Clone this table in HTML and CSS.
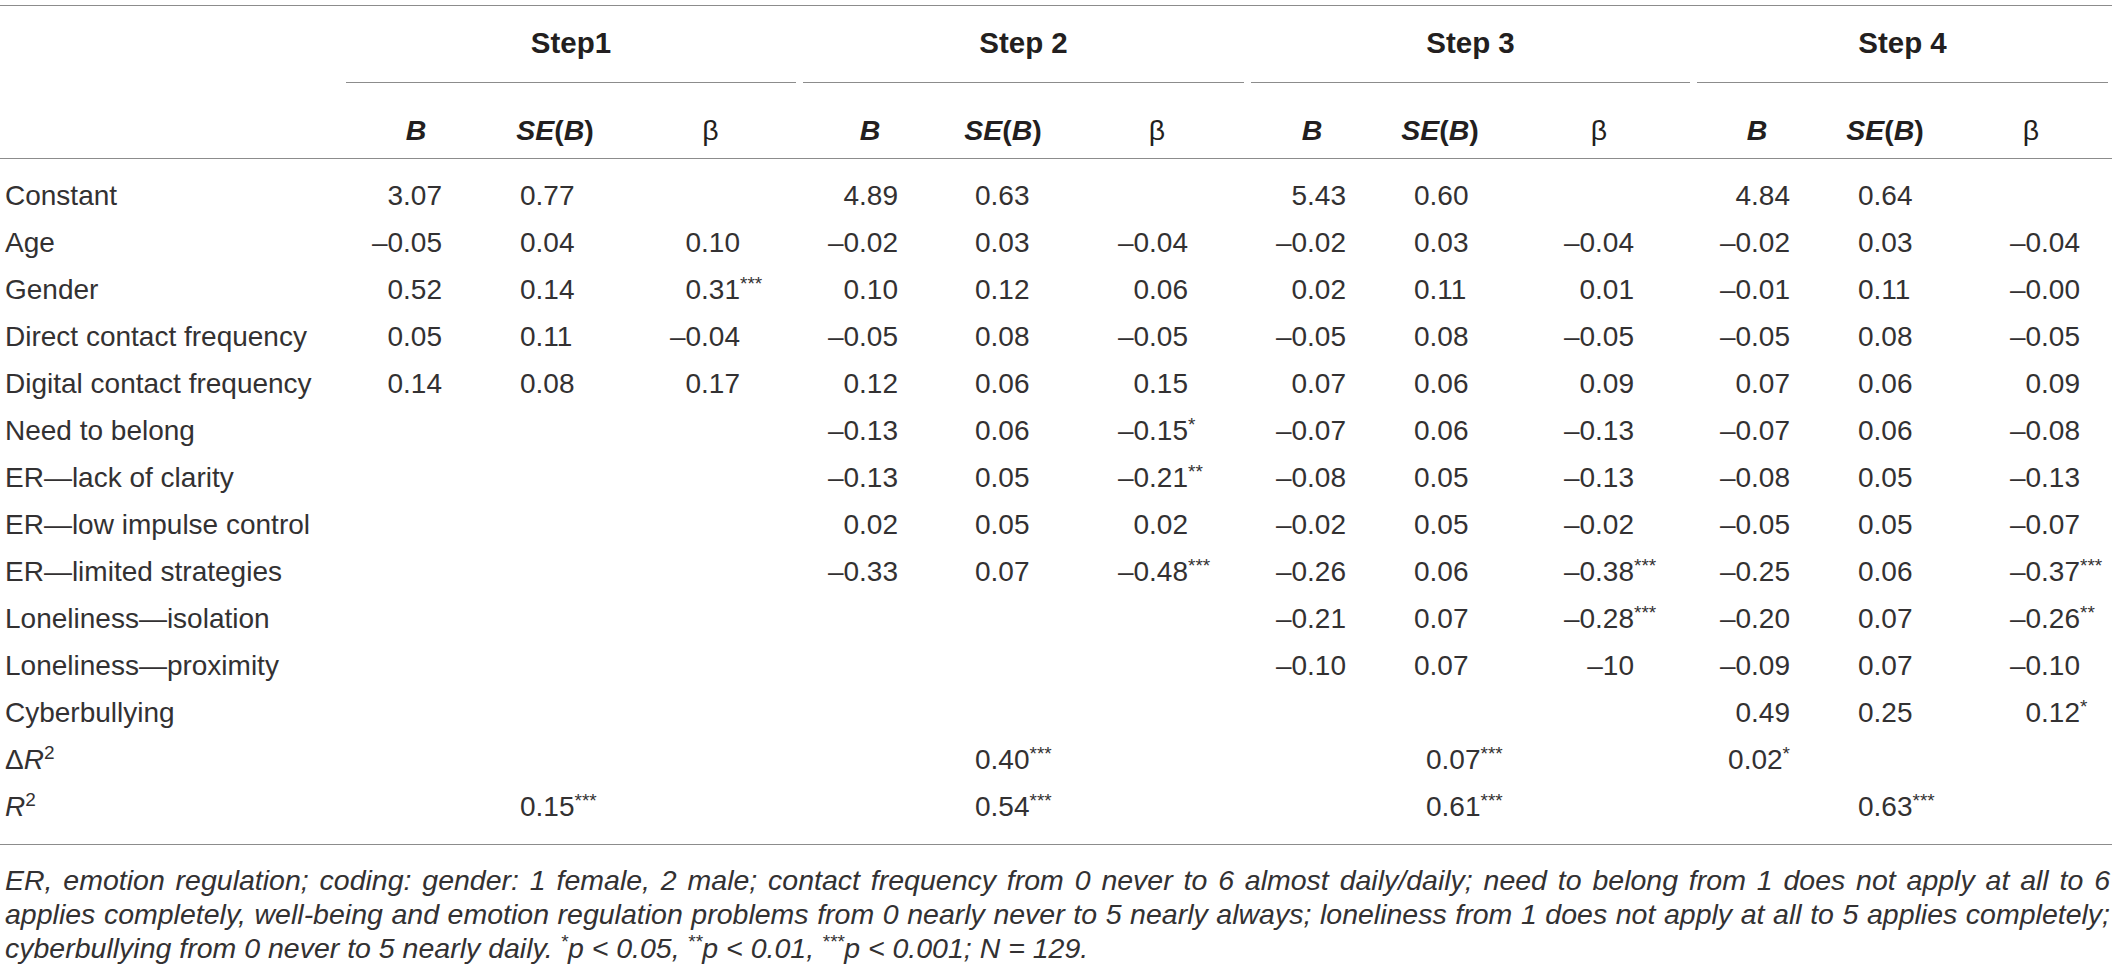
FILE: index.html
```html
<!DOCTYPE html>
<html lang="en">
<head>
<meta charset="utf-8">
<title>Hierarchical regression</title>
<link rel="stylesheet" href="styles.css">
</head>
<body>
<div class="page">
<table class="reg">
  <colgroup>
    <col class="w-label"><col class="w-b1"><col class="w-se1"><col class="w-bt1">
    <col class="w-b2"><col class="w-se2"><col class="w-bt2">
    <col class="w-b3"><col class="w-se3"><col class="w-bt3">
    <col class="w-b4"><col class="w-se4"><col class="w-bt4">
  </colgroup>
  <thead>
    <tr class="steps">
      <th></th>
      <th colspan="3"><div class="step">Step1</div></th>
      <th colspan="3"><div class="step">Step 2</div></th>
      <th colspan="3"><div class="step">Step 3</div></th>
      <th colspan="3"><div class="step">Step 4</div></th>
    </tr>
    <tr class="cols">
      <th></th>
      <th><b><i>B</i></b></th><th><b><i>SE</i>(<i>B</i>)</b></th><th>β</th>
      <th><b><i>B</i></b></th><th><b><i>SE</i>(<i>B</i>)</b></th><th>β</th>
      <th><b><i>B</i></b></th><th><b><i>SE</i>(<i>B</i>)</b></th><th>β</th>
      <th><b><i>B</i></b></th><th><b><i>SE</i>(<i>B</i>)</b></th><th>β</th>
    </tr>
  </thead>
  <tbody>
    <tr class="first">
      <td>Constant</td>
      <td>3.07</td><td>0.77</td><td></td>
      <td>4.89</td><td>0.63</td><td></td>
      <td>5.43</td><td>0.60</td><td></td>
      <td>4.84</td><td>0.64</td><td></td>
    </tr>
    <tr>
      <td>Age</td>
      <td>–0.05</td><td>0.04</td><td>0.10</td>
      <td>–0.02</td><td>0.03</td><td>–0.04</td>
      <td>–0.02</td><td>0.03</td><td>–0.04</td>
      <td>–0.02</td><td>0.03</td><td>–0.04</td>
    </tr>
    <tr>
      <td>Gender</td>
      <td>0.52</td><td>0.14</td><td>0.31<span class="st">***</span></td>
      <td>0.10</td><td>0.12</td><td>0.06</td>
      <td>0.02</td><td>0.11</td><td>0.01</td>
      <td>–0.01</td><td>0.11</td><td>–0.00</td>
    </tr>
    <tr>
      <td>Direct contact frequency</td>
      <td>0.05</td><td>0.11</td><td>–0.04</td>
      <td>–0.05</td><td>0.08</td><td>–0.05</td>
      <td>–0.05</td><td>0.08</td><td>–0.05</td>
      <td>–0.05</td><td>0.08</td><td>–0.05</td>
    </tr>
    <tr>
      <td>Digital contact frequency</td>
      <td>0.14</td><td>0.08</td><td>0.17</td>
      <td>0.12</td><td>0.06</td><td>0.15</td>
      <td>0.07</td><td>0.06</td><td>0.09</td>
      <td>0.07</td><td>0.06</td><td>0.09</td>
    </tr>
    <tr>
      <td>Need to belong</td>
      <td></td><td></td><td></td>
      <td>–0.13</td><td>0.06</td><td>–0.15<span class="st">*</span></td>
      <td>–0.07</td><td>0.06</td><td>–0.13</td>
      <td>–0.07</td><td>0.06</td><td>–0.08</td>
    </tr>
    <tr>
      <td>ER—lack of clarity</td>
      <td></td><td></td><td></td>
      <td>–0.13</td><td>0.05</td><td>–0.21<span class="st">**</span></td>
      <td>–0.08</td><td>0.05</td><td>–0.13</td>
      <td>–0.08</td><td>0.05</td><td>–0.13</td>
    </tr>
    <tr>
      <td>ER—low impulse control</td>
      <td></td><td></td><td></td>
      <td>0.02</td><td>0.05</td><td>0.02</td>
      <td>–0.02</td><td>0.05</td><td>–0.02</td>
      <td>–0.05</td><td>0.05</td><td>–0.07</td>
    </tr>
    <tr>
      <td>ER—limited strategies</td>
      <td></td><td></td><td></td>
      <td>–0.33</td><td>0.07</td><td>–0.48<span class="st">***</span></td>
      <td>–0.26</td><td>0.06</td><td>–0.38<span class="st">***</span></td>
      <td>–0.25</td><td>0.06</td><td>–0.37<span class="st">***</span></td>
    </tr>
    <tr>
      <td>Loneliness—isolation</td>
      <td></td><td></td><td></td>
      <td></td><td></td><td></td>
      <td>–0.21</td><td>0.07</td><td>–0.28<span class="st">***</span></td>
      <td>–0.20</td><td>0.07</td><td>–0.26<span class="st">**</span></td>
    </tr>
    <tr>
      <td>Loneliness—proximity</td>
      <td></td><td></td><td></td>
      <td></td><td></td><td></td>
      <td>–0.10</td><td>0.07</td><td>–10</td>
      <td>–0.09</td><td>0.07</td><td>–0.10</td>
    </tr>
    <tr>
      <td>Cyberbullying</td>
      <td></td><td></td><td></td>
      <td></td><td></td><td></td>
      <td></td><td></td><td></td>
      <td>0.49</td><td>0.25</td><td>0.12<span class="st">*</span></td>
    </tr>
    <tr>
      <td>Δ<i>R</i><sup>2</sup></td>
      <td></td><td></td><td></td>
      <td></td><td>0.40<sup class="sig">***</sup></td><td></td>
      <td></td><td class="shift">0.07<sup class="sig">***</sup></td><td></td>
      <td>0.02<sup class="sig">*</sup></td><td></td><td></td>
    </tr>
    <tr class="last">
      <td><i>R</i><sup>2</sup></td>
      <td></td><td>0.15<sup class="sig">***</sup></td><td></td>
      <td></td><td>0.54<sup class="sig">***</sup></td><td></td>
      <td></td><td class="shift">0.61<sup class="sig">***</sup></td><td></td>
      <td></td><td>0.63<sup class="sig">***</sup></td><td></td>
    </tr>
  </tbody>
</table>
<div class="note">
  <span class="line just"><i>ER</i>, emotion regulation; coding: gender: 1 female, 2 male; contact frequency from 0 never to 6 almost daily/daily; need to belong from 1 does not apply at all to 6</span>
  <span class="line just">applies completely, well-being and emotion regulation problems from 0 nearly never to 5 nearly always; loneliness from 1 does not apply at all to 5 applies completely;</span>
  <span class="line">cyberbullying from 0 never to 5 nearly daily. <sup>*</sup>p &lt; 0.05, <sup>**</sup>p &lt; 0.01, <sup>***</sup>p &lt; 0.001; N = 129.</span>
</div>
</div>
</body>
</html>
```

FILE: styles.css
```css
html, body {
  margin: 0;
  padding: 0;
  background: #ffffff;
}

.page {
  width: 2112px;
  padding-top: 5px;
  font-family: "Liberation Sans", Arial, Helvetica, sans-serif;
  color: #333132;
}

.reg {
  width: 2112px;
  table-layout: fixed;
  border-collapse: collapse;
  border-top: 1px solid #8c8c8c;
  font-size: 28px;
}

.w-label { width: 343px; }
.w-b1 { width: 146px; }
.w-se1 { width: 132px; }
.w-bt1 { width: 179px; }
.w-b2 { width: 140px; }
.w-se2 { width: 126px; }
.w-bt2 { width: 182px; }
.w-b3 { width: 128px; }
.w-se3 { width: 128px; }
.w-bt3 { width: 190px; }
.w-b4 { width: 126px; }
.w-se4 { width: 130px; }
.w-bt4 { width: 162px; }

.reg th {
  padding: 0;
  font-weight: normal;
  text-align: center;
}

.steps th {
  vertical-align: bottom;
}

.step {
  margin: 0 4px 0 3px;
  height: 76px;
  line-height: 74px;
  border-bottom: 1px solid #8c8c8c;
  font-weight: bold;
  font-size: 29.5px;
  color: #231f20;
}

.cols th {
  padding-top: 20px;
  line-height: 55px;
  font-size: 28.5px;
  color: #231f20;
  border-bottom: 1px solid #8c8c8c;
}

.reg td {
  padding: 0;
  line-height: 47px;
  white-space: nowrap;
  vertical-align: middle;
}

.reg td:first-child {
  padding-left: 5px;
  text-align: left;
}

/* B columns */
.reg td:nth-child(3n+2) { text-align: right; }
/* SE columns */
.reg td:nth-child(3n) { text-align: left; }
/* beta columns */
.reg td:nth-child(3n+4) { text-align: right; }

.reg td:nth-child(2) { padding-right: 47px; }
.reg td:nth-child(3) { padding-left: 31px; }
.reg td:nth-child(4) { padding-right: 60px; }
.reg td:nth-child(5) { padding-right: 42px; }
.reg td:nth-child(6) { padding-left: 35px; }
.reg td:nth-child(7) { padding-right: 60px; }
.reg td:nth-child(8) { padding-right: 30px; }
.reg td:nth-child(9) { padding-left: 38px; }
.reg td:nth-child(10) { padding-right: 60px; }
.reg td:nth-child(11) { padding-right: 30px; }
.reg td:nth-child(12) { padding-left: 38px; }
.reg td:nth-child(13) { padding-right: 32px; }

.reg td.shift { padding-left: 50px; }

.reg tr.first td { padding-top: 13px; }
.reg tr.last td {
  padding-bottom: 14px;
  border-bottom: 1px solid #8c8c8c;
}

.reg sup {
  font-size: 19px;
  line-height: 1;
  vertical-align: 10px;
}

.reg sup.sig {
  font-size: 19px;
  vertical-align: 9px;
}

.st {
  display: inline-block;
  width: 0;
  white-space: nowrap;
  text-align: left;
  font-size: 19px;
  line-height: 1;
  vertical-align: 9px;
}

.note {
  padding: 18px 0 0 5px;
  width: 2105px;
  font-style: italic;
  font-size: 28.5px;
  line-height: 34px;
}

.note .line {
  display: block;
  white-space: nowrap;
}

.note .line.just {
  white-space: normal;
  text-align: justify;
  text-align-last: justify;
}

.note sup {
  font-size: 19px;
  line-height: 1;
  vertical-align: 10px;
}
```
